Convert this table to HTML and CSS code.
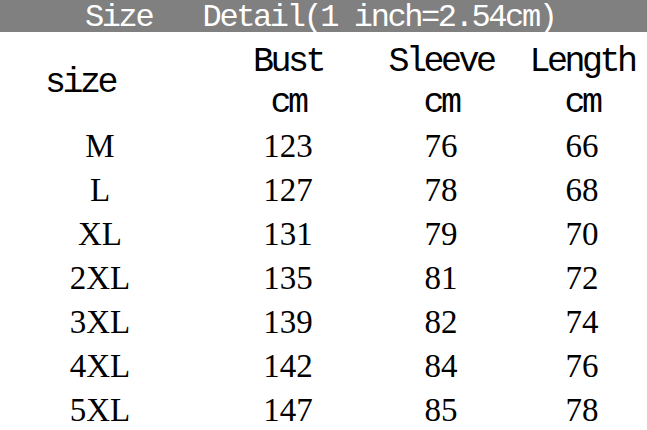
FILE: index.html
```html
<!DOCTYPE html>
<html>
<head>
<meta charset="utf-8">
<link rel="stylesheet" href="styles.css">
</head>
<body>
<div class="bar">Size&nbsp;&nbsp;&nbsp;Detail(1 inch=2.54cm)</div>
<div class="chart">
  <div class="cell head size-label">size</div>
  <div class="cell head">Bust</div>
  <div class="cell head">Sleeve</div>
  <div class="cell head c4">Length</div>
  <div class="cell head">cm</div>
  <div class="cell head">cm</div>
  <div class="cell head c4">cm</div>

  <div class="cell num">M</div><div class="cell num">123</div><div class="cell num">76</div><div class="cell num c4">66</div>
  <div class="cell num">L</div><div class="cell num">127</div><div class="cell num">78</div><div class="cell num c4">68</div>
  <div class="cell num">XL</div><div class="cell num">131</div><div class="cell num">79</div><div class="cell num c4">70</div>
  <div class="cell num">2XL</div><div class="cell num">135</div><div class="cell num">81</div><div class="cell num c4">72</div>
  <div class="cell num">3XL</div><div class="cell num">139</div><div class="cell num">82</div><div class="cell num c4">74</div>
  <div class="cell num">4XL</div><div class="cell num">142</div><div class="cell num">84</div><div class="cell num c4">76</div>
  <div class="cell num">5XL</div><div class="cell num">147</div><div class="cell num">85</div><div class="cell num c4">78</div>
</div>
</body>
</html>
```
FILE: styles.css
```css
html, body {
  margin: 0;
  padding: 0;
  background: #fff;
  overflow: hidden;
}
.bar {
  height: 29px;
  padding-top: 3px;
  background: #808080;
  color: #fff;
  font-family: "Liberation Mono", monospace;
  font-size: 32px;
  letter-spacing: -2.4px;
  line-height: 29px;
  padding-left: 85px;
  white-space: pre;
}
.chart {
  margin-top: 10px;
  display: grid;
  grid-template-columns: 200px 176px 130px 141px;
  grid-template-rows: 41px 41px repeat(7, 44px);
  color: #000;
}
.cell {
  text-align: center;
  white-space: nowrap;
}
.c4 {
  padding-left: 11px;
}
.head {
  font-family: "Liberation Mono", monospace;
  font-size: 35px;
  letter-spacing: -3.5px;
  line-height: 41px;
}
.size-label {
  grid-row: 1 / span 2;
  align-self: center;
  padding-right: 40px;
}
.num {
  font-family: "Liberation Serif", serif;
  font-size: 33px;
  line-height: 44px;
}
```
